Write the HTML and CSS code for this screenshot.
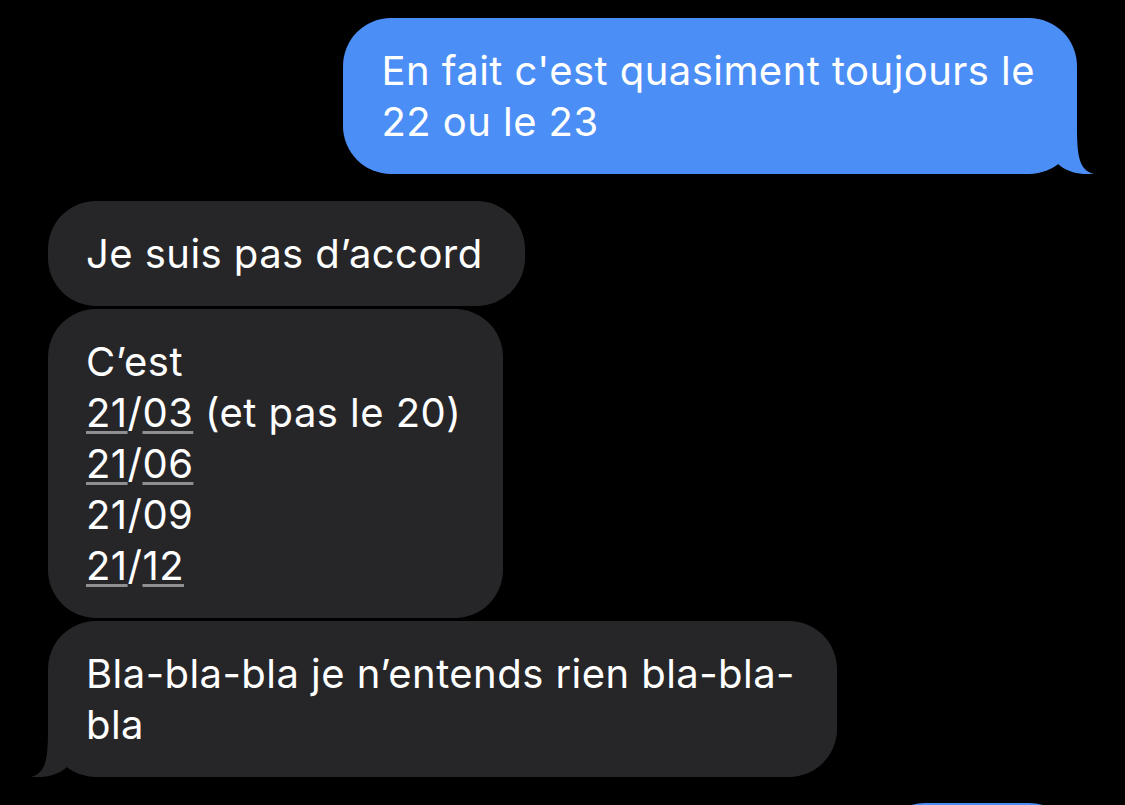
FILE: index.html
```html
<!DOCTYPE html>
<html lang="fr">
<head>
<meta charset="utf-8">
<title>Messages</title>
<link rel="stylesheet" href="styles.css">
</head>
<body>
<div class="thread">
  <div class="row out">
    <div class="bubble sent">En fait c'est quasiment toujours le<br>22 ou le 23<svg class="tail" viewBox="0 0 65 48" width="65" height="48" aria-hidden="true"><path d="M48 0 C48 30 50 44 65 48 C53 49 39 47 29 38 L40 22 L44 0 Z"/></svg></div>
  </div>
  <div class="row in first">
    <div class="bubble recv">Je suis pas d’accord</div>
  </div>
  <div class="row in">
    <div class="bubble recv">C’est<br><span class="link">21</span>/<span class="link">03</span> (et pas le 20)<br><span class="link">21</span>/<span class="link">06</span><br>21/09<br><span class="link">21</span>/<span class="link">12</span></div>
  </div>
  <div class="row in">
    <div class="bubble recv">Bla-bla-bla je n’entends rien bla-bla-<br>bla<svg class="tail" viewBox="0 0 65 48" width="65" height="48" aria-hidden="true"><path d="M48 0 C48 30 50 44 65 48 C53 49 39 47 29 38 L40 22 L44 0 Z"/></svg></div>
  </div>
  <div class="row out next">
    <div class="bubble sent peek" aria-hidden="true"></div>
  </div>
</div>
</body>
</html>
```

FILE: styles.css
```css
html, body {
  margin: 0;
  padding: 0;
  background: #000;
}

body {
  width: 1125px;
  height: 805px;
  overflow: hidden;
  font-family: "Inter", "Noto Sans", "Liberation Sans", sans-serif;
  font-size: 40px;
  line-height: 51px;
  color: #fff;
  -webkit-font-smoothing: antialiased;
}

.thread {
  display: flex;
  flex-direction: column;
  padding: 18px 48px 0;
}

.row {
  display: flex;
  margin-top: 3px;
}

.row:first-child {
  margin-top: 0;
}

.row.out {
  justify-content: flex-end;
}

.row.in {
  justify-content: flex-start;
}

.row.first {
  margin-top: 27px;
}

.row.next {
  margin-top: 26px;
}

.bubble {
  position: relative;
  white-space: nowrap;
  padding: 27px 42px 27px 38px;
  border-radius: 48px;
  letter-spacing: 0.45px;
}

.sent {
  background: #4b8ef6;
}

.sent .tail {
  position: absolute;
  right: -17px;
  bottom: 0;
  fill: #4b8ef6;
}

.recv {
  background: #262629;
}

.recv .tail {
  position: absolute;
  left: -17px;
  bottom: 0;
  fill: #262629;
  transform: scaleX(-1);
}

.peek {
  box-sizing: border-box;
  width: 200px;
  height: 100px;
  padding: 0;
}

.link {
  text-decoration: underline;
  text-decoration-color: #8e8e93;
  text-decoration-thickness: 3px;
  text-underline-offset: 4px;
}
```
